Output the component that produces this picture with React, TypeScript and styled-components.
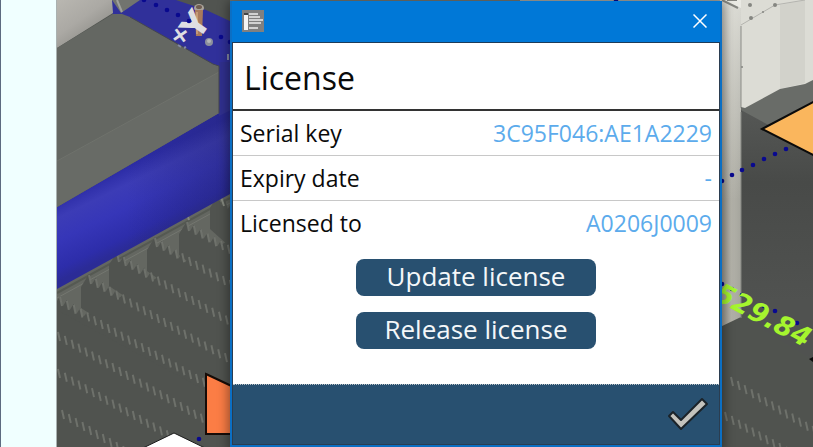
import React from "react";
import styled, { createGlobalStyle } from "styled-components";

const GlobalStyle = createGlobalStyle`
  *, *::before, *::after { box-sizing: border-box; }
  html, body, #root { height: 100%; }
  body {
    margin: 0;
    overflow: hidden;
    font-family: "Open Sans", "Noto Sans", sans-serif;
    color: #0a0a0a;
  }
`;

const Page = styled.div`
  display: grid;
  grid-template-columns: 57px 1fr;
  min-height: 100%;
`;

const SidePanel = styled.aside`
  background: #f0ffff;
  border-left: 1px solid #5d6b80;
  border-right: 1px solid #a9b1b0;
`;

const Viewport = styled.main`
  position: relative;
  display: grid;
  overflow: hidden;
  background: #50534f;
`;

const SceneSvg = styled.svg`
  position: absolute;
  inset: 0;
  width: 100%;
  height: 100%;
`;

const Dialog = styled.section`
  position: relative;
  display: flex;
  flex-direction: column;
  margin: 1px 91px 0 173px;
  border: 2px solid #0b6fc4;
  border-top-width: 0;
  background: #ffffff;
  box-shadow: 0 2px 10px 2px rgba(0, 0, 0, 0.4);
`;

const TitleBar = styled.header`
  display: flex;
  align-items: center;
  justify-content: space-between;
  height: 41px;
  padding: 0 10px 1px;
  background: #0078d7;
`;

const CloseButton = styled.button`
  display: grid;
  place-items: center;
  width: 20px;
  height: 20px;
  padding: 0;
  border: 0;
  background: transparent;
  color: #ffffff;
`;

const Body = styled.div`
  display: flex;
  flex-direction: column;
  flex: 1;
  border: 1px solid #2b3d50;
  border-top: 1px solid #1d3b58;
`;

const Heading = styled.h1`
  margin: 0;
  padding: 13px 11px 9px;
  border-bottom: 2px solid #333333;
  font-size: 32px;
  line-height: 44px;
  font-weight: 400;
`;

const Details = styled.dl`
  margin: 0;
`;

const DetailRow = styled.div`
  display: flex;
  align-items: center;
  justify-content: space-between;
  min-height: 44px;
  padding: 0 7px;
  font-size: 23px;
  line-height: 32px;

  & + & {
    min-height: 45px;
    border-top: 1px solid #c8c8c8;
  }
`;

const Term = styled.dt``;

const Value = styled.dd`
  margin: 0;
  color: #5cabec;
`;

const Actions = styled.div`
  display: flex;
  flex-direction: column;
  align-items: center;
  gap: 16px;
  flex: 1;
  padding: 14px 0 35px;
`;

const ActionButton = styled.button`
  width: 240px;
  height: 37px;
  padding: 0 0 2px;
  border: 0;
  border-radius: 8px;
  background: #285070;
  color: #f4f7f9;
  font-family: inherit;
  font-size: 26px;
  line-height: 35px;
`;

const Footer = styled.footer`
  display: flex;
  align-items: center;
  justify-content: flex-end;
  height: 60px;
  padding: 0 10px 2px;
  border-top: 1px dotted #b8c0c4;
  background: #285070;
`;

const ConfirmButton = styled.button`
  display: grid;
  place-items: center;
  padding: 0;
  border: 0;
  background: transparent;
`;

type Point = [number, number];

const combRows: { from: Point; to: Point }[] = [
  { from: [187, 222], to: [230, 246] },
  { from: [155, 238], to: [230, 280] },
  { from: [117, 253], to: [230, 318] },
  { from: [89, 275], to: [230, 356] },
  { from: [60, 297], to: [205, 379] },
  { from: [58, 332], to: [205, 416] },
  { from: [58, 369], to: [170, 432] },
  { from: [62, 410], to: [130, 450] },
  { from: [731, 377], to: [813, 426] },
  { from: [725, 412], to: [790, 449] },
];

const pathDots: Point[] = [
  [144, 0], [156, 5], [167, 10], [178, 15], [189, 21], [221, 37], [230, 42],
  [616, 0], [722, 181], [732, 175], [742, 170], [753, 165], [764, 159],
  [775, 154], [786, 149], [722, 284], [732, 289], [742, 295], [764, 306],
  [775, 311], [797, 323], [199, 439],
];

function teethOf({ from, to }: { from: Point; to: Point }) {
  const count = Math.floor((to[0] - from[0]) / 6.8);
  const slope = (to[1] - from[1]) / (to[0] - from[0]);
  return Array.from({ length: count + 1 }, (_, i) => {
    const x = from[0] + i * 6.8;
    const y = from[1] + i * 6.8 * slope;
    return `M${x} ${y}l2 9`;
  }).join("");
}

/* Dark sawtooth plates standing in front of the machine's side rail. */
function plateOf(x: number, y: number, teeth: number) {
  let d = `M${x - 8} ${y + 34}L${x - 8} ${y + 13}`;
  for (let i = 0; i < teeth; i += 1) {
    d += `L${x + i * 6.8} ${y + i * 3.9}l3 10`;
  }
  return `${d}L${x + teeth * 6.8} ${y + teeth * 3.9 + 50}Z`;
}

function Scene() {
  return (
    <SceneSvg viewBox="57 0 756 447" preserveAspectRatio="xMinYMin slice" aria-hidden="true">
      <defs>
        <linearGradient id="rail" x1="120" y1="170" x2="152" y2="236" gradientUnits="userSpaceOnUse">
          <stop offset="0" stopColor="#2c2ca6" />
          <stop offset="0.22" stopColor="#3c3cb6" />
          <stop offset="0.5" stopColor="#3636b8" />
          <stop offset="0.85" stopColor="#2d2daa" />
          <stop offset="1" stopColor="#2b2b96" />
        </linearGradient>
        <linearGradient id="railShade" x1="57" y1="0" x2="230" y2="0" gradientUnits="userSpaceOnUse">
          <stop offset="0.4" stopColor="#20205c" stopOpacity="0" />
          <stop offset="1" stopColor="#20205c" stopOpacity="0.35" />
        </linearGradient>
        <linearGradient id="column" x1="721" y1="0" x2="741" y2="0" gradientUnits="userSpaceOnUse">
          <stop offset="0" stopColor="#9b9991" />
          <stop offset="0.5" stopColor="#b5b4ab" />
          <stop offset="1" stopColor="#a4a49c" />
        </linearGradient>
        <linearGradient id="columnLight" x1="0" y1="0" x2="0" y2="200" gradientUnits="userSpaceOnUse">
          <stop offset="0" stopColor="#f0f0ea" stopOpacity="0.7" />
          <stop offset="1" stopColor="#f0f0ea" stopOpacity="0" />
        </linearGradient>
        <linearGradient id="block" x1="57" y1="0" x2="85" y2="40" gradientUnits="userSpaceOnUse">
          <stop offset="0" stopColor="#b9b7b1" />
          <stop offset="0.6" stopColor="#aba9a4" />
          <stop offset="1" stopColor="#94938e" />
        </linearGradient>
        <linearGradient id="side" x1="0" y1="105" x2="0" y2="300" gradientUnits="userSpaceOnUse">
          <stop offset="0" stopColor="#565856" />
          <stop offset="0.4" stopColor="#484a48" />
          <stop offset="1" stopColor="#505250" />
        </linearGradient>
      </defs>

      <path d="M57 0H813V447H57Z" fill="#50534f" />

      <path d="M57 285L230 190V240L57 330Z" fill="#646761" />
      <path d="M57 293L230 198" stroke="#555952" strokeWidth="2" />
      <path d="M57 298L230 203" stroke="#747770" strokeWidth="1" />
      <path
        d={[
          plateOf(187, 221, 9), plateOf(155, 237, 12), plateOf(117, 252, 18),
          plateOf(89, 274, 22), plateOf(60, 296, 22), plateOf(218, 195, 4),
        ].join("")}
        fill="#50534f"
      />
      <path d="M57 310L205 390V447H57Z" fill="#50534f" />
      <path d={combRows.map(teethOf).join("")} stroke="#7b7e77" strokeWidth="2" opacity="0.7" />
      <path d="M185 208l4 12M221 197l3 9" stroke="#85897f" strokeWidth="2" />

      <path d="M110 0H230V112L121 60Z" fill="#30309a" />
      <path d="M176 0H232V22L206 10Z" fill="#515450" />
      <path d="M112 0H140L121 13Z" fill="#72746f" />
      <path d="M57 0H112L113 13L57 48Z" fill="url(#block)" />
      <path d="M117 0L122 12" stroke="#a0a19d" strokeWidth="2" />
      <path d="M57 207L219 113L230 107V194L57 289Z" fill="url(#rail)" />
      <path d="M57 207L219 113L230 107V194L57 289Z" fill="url(#railShade)" />
      <path d="M219 62H231V110L219 116Z" fill="#30308f" />
      <path d="M57 48L113 14H122L130 17L213 64L219 66V113L57 207Z" fill="#646762" />
      <path d="M57 161L219 72V113L57 207Z" fill="#686b66" />
      <path d="M57 161L219 72" stroke="#6f726c" />
      <path d="M130 17L213 64L219 66V113" fill="none" stroke="#44464f" />

      <ellipse cx="199" cy="8" rx="5" ry="4" fill="#aaa49b" />
      <path d="M195 10H203L202 36H196Z" fill="#a97a5c" />
      <path d="M197 12V34" stroke="#c59a76" strokeWidth="2" />
      <ellipse cx="199" cy="7" rx="3" ry="2" fill="#705d50" />
      <circle cx="209" cy="42" r="4" fill="#8c909c" />
      <circle cx="209" cy="41" r="2" fill="#b4b6b8" />
      <path d="M178 45l3 2M184 48l2-1M228 54v6" stroke="#858aa4" strokeWidth="2" />
      <g
        fill="#dedee2"
        fontFamily="DejaVu Sans, sans-serif"
        fontWeight="700"
        textAnchor="middle"
      >
        <text x="180" y="43" transform="rotate(-35 180 35)" fontSize="24">
          +
        </text>
        <text x="196" y="36" transform="rotate(-55 196 25)" fontSize="34">
          Y
        </text>
      </g>

      <path d="M230 0H721V2H230Z" fill="#73756f" />
      <path d="M520 0H813V2H520Z" fill="#a6a7a1" />
      <path d="M720 0H813V106L741 130H720Z" fill="#dcdcd5" />
      <path d="M780 5L805 0V83L780 89Z" fill="#d2d2cb" />
      <path d="M720 0L741 8V317L720 327Z" fill="url(#column)" />
      <path d="M720 0H741V200H720Z" fill="url(#columnLight)" />
      <path d="M741 25L763 12L775 5L805 0" fill="none" stroke="#b4b4af" strokeWidth="1" />
      <path d="M722 0L738 8M727 0h10" stroke="#858681" strokeWidth="2" />
      <path d="M741 26V108" stroke="#8b8c88" />
      <g fill="#858681">
        <circle cx="751" cy="18" r="2" />
        <circle cx="750" cy="5" r="2" />
        <circle cx="763" cy="12" r="1" />
        <circle cx="775" cy="5" r="2" />
        <circle cx="742" cy="67" r="1" />
      </g>
      <path d="M741 107L745 108L780 89L805 84L813 80V180H741Z" fill="#696c68" />
      <path d="M741 110L813 149V360L741 317Z" fill="url(#side)" />
      <path d="M741 112V318" stroke="#858782" />
      <path d="M762 129L815 101V156Z" fill="#fab65d" stroke="#0b0b0b" strokeWidth="2" />

      <g fill="#09098f">
        {pathDots.map(([x, y]) => (
          <circle key={`${x}-${y}`} cx={x} cy={y} r="2.3" />
        ))}
      </g>
      <text
        x="713"
        y="299"
        transform="rotate(28 713 299)"
        fill="#a5f52e"
        fontFamily="DejaVu Sans, sans-serif"
        fontWeight="700"
        fontStyle="italic"
        fontSize="27"
      >
        529.84
      </text>
      <path d="M809 359l4-2v5z" fill="#0b0b0b" />

      <path d="M206 374L240 390V434H206Z" fill="#fb7d45" stroke="#160c08" strokeWidth="2" />
      <path d="M143 448L174 433L205 448Z" fill="#ffffff" stroke="#1a1a1a" />
    </SceneSvg>
  );
}

function DocumentIcon() {
  return (
    <svg width="22" height="22" viewBox="0 0 22 22" aria-hidden="true">
      <path d="M0 0H22V22H0Z" fill="#808080" />
      <path d="M2 3H6V20H2Z" fill="#f4f4f4" />
      <path d="M2 3H6V5H2Z" fill="#444444" />
      <path d="M7 4H16M7 7H18M7 10H21M7 13H19M7 18H16" stroke="#d2d2d2" strokeWidth="2" />
    </svg>
  );
}

function CloseIcon() {
  return (
    <svg width="14" height="14" viewBox="0 0 14 14" aria-hidden="true">
      <path d="M0.5 0.5L13.5 13.5M13.5 0.5L0.5 13.5" stroke="currentColor" strokeWidth="1.5" />
    </svg>
  );
}

function CheckIcon() {
  return (
    <svg width="42" height="34" viewBox="0 0 42 34" aria-hidden="true">
      <path
        d="M2 19L6 15L14 23L35 2L40 7L14 32Z"
        fill="#c4c3bd"
        stroke="#1b2329"
        strokeWidth="2"
        strokeLinejoin="round"
      />
    </svg>
  );
}

const licenseDetails = [
  { label: "Serial key", value: "3C95F046:AE1A2229" },
  { label: "Expiry date", value: "-" },
  { label: "Licensed to", value: "A0206J0009" },
];

export default function App() {
  return (
    <>
      <GlobalStyle />
      <Page>
        <SidePanel />
        <Viewport>
          <Scene />
          <Dialog role="dialog" aria-labelledby="license-title">
            <TitleBar>
              <DocumentIcon />
              <CloseButton type="button" aria-label="Close">
                <CloseIcon />
              </CloseButton>
            </TitleBar>
            <Body>
              <Heading id="license-title">License</Heading>
              <Details>
                {licenseDetails.map(({ label, value }) => (
                  <DetailRow key={label}>
                    <Term>{label}</Term>
                    <Value>{value}</Value>
                  </DetailRow>
                ))}
              </Details>
              <Actions>
                <ActionButton type="button">Update license</ActionButton>
                <ActionButton type="button">Release license</ActionButton>
              </Actions>
              <Footer>
                <ConfirmButton type="button" aria-label="Confirm">
                  <CheckIcon />
                </ConfirmButton>
              </Footer>
            </Body>
          </Dialog>
        </Viewport>
      </Page>
    </>
  );
}
